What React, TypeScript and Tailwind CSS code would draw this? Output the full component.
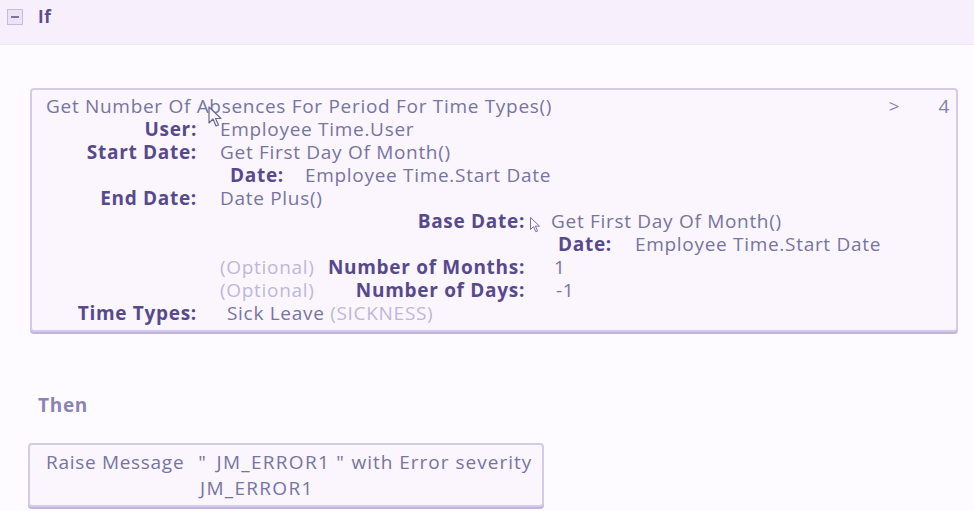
import React from 'react';

const font = { fontFamily: '"Open Sans", "Liberation Sans", sans-serif' };

// Mouse pointer drawn over the content (part of the screenshot)
function Pointer({ className }: { className: string }) {
  return (
    <svg className={className} width="14" height="22" viewBox="0 0 14 22" fill="none">
      <path
        d="M1 1 L1 17 L5 13 L8 20 L10.5 19 L7.5 12.5 L13 12.5 Z"
        fill="#fbf6fe"
        stroke="#6b6890"
        strokeWidth="1.2"
        strokeLinejoin="round"
      />
    </svg>
  );
}

function Label({ children }: { children: React.ReactNode }) {
  return <span className="font-bold text-[#574a8c]">{children}</span>;
}

function Value({ children }: { children: React.ReactNode }) {
  return <span className="text-[#7674a0]">{children}</span>;
}

export default function App(): React.ReactElement {
  return (
    <div
      className="relative w-[974px] h-[511px] overflow-hidden bg-[#fdfbff] text-[19px] leading-[23px] tracking-[0.7px] whitespace-nowrap"
      style={font}
    >
      {/* If header */}
      <div className="flex items-start h-[45px] bg-[#f7effb] border-b border-[#f1e9f6] pl-[7px] pt-[8px]">
        <div className="mt-[1px] flex items-center justify-center w-[16px] h-[16px] border border-[#c3bcdb] bg-[#ebe4f4]">
          <div className="w-[8px] h-[2px] bg-[#7a74a0]" />
        </div>
        <span className="ml-[15px] font-bold text-[#5a4f8a] text-[17px] leading-[18px]">If</span>
      </div>

      {/* Condition card */}
      <div className="relative mt-[43px] ml-[30px] w-[928px] h-[244px] rounded-[4px] border-2 border-[#d3cbe8] bg-[#fbf6fe] shadow-[0_2px_0_#bfb5dc] pl-[14px] pr-[6px] pt-[5px]">
        <div className="flex justify-between">
          <Value>Get Number Of Absences For Period For Time Types()</Value>
          <div className="flex gap-[38px] text-[#8581ad]">
            <span>&gt;</span>
            <span>4</span>
          </div>
        </div>

        <div className="flex">
          <div className="w-[151px] text-right">
            <Label>User:</Label>
          </div>
          <div className="ml-[23px]">
            <Value>Employee Time.User</Value>
          </div>
        </div>

        <div className="flex">
          <div className="w-[151px] text-right">
            <Label>Start Date:</Label>
          </div>
          <div className="ml-[23px]">
            <Value>Get First Day Of Month()</Value>
            <div className="flex pl-[10px]">
              <Label>Date:</Label>
              <span className="ml-[21px]">
                <Value>Employee Time.Start Date</Value>
              </span>
            </div>
          </div>
        </div>

        <div className="flex">
          <div className="w-[151px] text-right">
            <Label>End Date:</Label>
          </div>
          <div className="ml-[23px]">
            <Value>Date Plus()</Value>
            <div className="flex">
              <div className="w-[305px] text-right">
                <Label>Base Date:</Label>
              </div>
              <div className="ml-[26px]">
                <Value>Get First Day Of Month()</Value>
                <div className="flex pl-[7px]">
                  <Label>Date:</Label>
                  <span className="ml-[23px]">
                    <Value>Employee Time.Start Date</Value>
                  </span>
                </div>
              </div>
            </div>
            <div className="flex">
              <div className="w-[305px] flex justify-between">
                <span className="text-[#bdb8d8]">(Optional)</span>
                <Label>Number of Months:</Label>
              </div>
              <div className="ml-[29px]">
                <Value>1</Value>
              </div>
            </div>
            <div className="flex">
              <div className="w-[305px] flex justify-between">
                <span className="text-[#bdb8d8]">(Optional)</span>
                <Label>Number of Days:</Label>
              </div>
              <div className="ml-[31px]">
                <Value>-1</Value>
              </div>
            </div>
          </div>
        </div>

        <div className="flex">
          <div className="w-[151px] text-right">
            <Label>Time Types:</Label>
          </div>
          <div className="ml-[30px]">
            <Value>Sick Leave </Value>
            <span className="text-[#bdb8d8]">(SICKNESS)</span>
          </div>
        </div>

        <Pointer className="absolute left-[176px] top-[16px]" />
        <Pointer className="absolute left-[496px] top-[124px] scale-75" />
      </div>

      {/* Then */}
      <div className="mt-[62px] ml-[38px] font-bold text-[#8a84b4]">Then</div>

      <div className="mt-[26px] ml-[28px] w-[516px] h-[64px] rounded-[4px] border-2 border-[#d3cbe8] bg-[#fbf6fe] shadow-[0_2px_0_#bfb5dc] pl-[16px] pt-[6px] text-[#7674a0]">
        <div className="flex">
          <span>Raise Message</span>
          <span className="ml-[14px]">"</span>
          <span className="ml-[10px] tracking-[1.3px]">JM_ERROR1</span>
          <span className="ml-[6px]">"</span>
          <span className="ml-[7px] tracking-[1px]">with Error severity</span>
        </div>
        <div className="mt-[3px] ml-[154px] tracking-[1.3px]">JM_ERROR1</div>
      </div>
    </div>
  );
}
